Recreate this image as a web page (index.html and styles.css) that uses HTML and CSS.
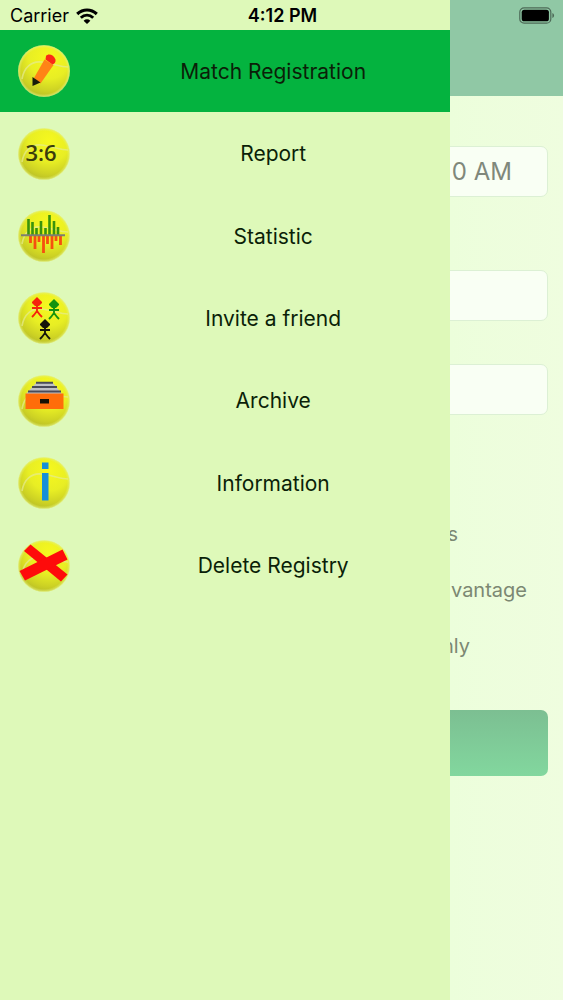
FILE: index.html
```html
<!DOCTYPE html>
<html lang="en">
<head>
    <meta charset="UTF-8">
    <meta name="viewport" content="width=device-width, initial-scale=1.0">
    <title>Match Registration</title>
    <link rel="stylesheet" href="styles.css">
</head>
<body>
    <!-- shared tennis ball -->
    <svg class="defs" width="0" height="0" aria-hidden="true">
        <defs>
            <radialGradient id="ballShade" cx="0.6" cy="0.25" r="0.8">
                <stop offset="0" stop-color="#f6f81e"/>
                <stop offset="0.5" stop-color="#e8ee24"/>
                <stop offset="0.8" stop-color="#cdd224"/>
                <stop offset="1" stop-color="#b4ba28"/>
            </radialGradient>
            <radialGradient id="ballEdge">
                <stop offset="0.88" stop-color="#e4f070" stop-opacity="0"/>
                <stop offset="1" stop-color="#e4f283" stop-opacity="0.8"/>
            </radialGradient>
            <symbol id="ball" viewBox="0 0 52 52">
                <circle cx="26" cy="26" r="25.6" fill="url(#ballShade)"/>
                <path d="M4 34C6 22 14 16 23 17C34 18 42 22 50 22" fill="none" stroke="#e6eb92" stroke-width="1.6" opacity="0.7"/>
                <circle cx="26" cy="26" r="26" fill="url(#ballEdge)"/>
            </symbol>
            <symbol id="person" viewBox="0 0 12 21">
                <path d="M6 0L8 2L11 5V6L8 9H4L1 6V5L4 2Z" fill="currentColor"/>
                <path d="M6 8V15M1 11H11M6 14L3 18L1 20M6 14L9 18L11 20" fill="none" stroke="currentColor" stroke-width="1.9"/>
            </symbol>
        </defs>
    </svg>

    <div class="page">
        <header class="status">
            <div class="status-left">
                <span>Carrier</span>
                <svg class="wifi" viewBox="0 0 22 16" aria-hidden="true">
                    <path d="M1.2 6C7 0.6 15 0.6 20.8 6" fill="none" stroke="#000" stroke-width="3.1"/>
                    <path d="M4.8 9.8C8.5 6.3 13.5 6.3 17.2 9.8" fill="none" stroke="#000" stroke-width="2.9"/>
                    <path d="M11 16L7.6 12.7C9.7 10.9 12.3 10.9 14.4 12.7Z" fill="#000"/>
                </svg>
            </div>
            <div class="status-time">4:12 PM</div>
            <div class="status-right">
                <svg class="battery" viewBox="0 0 36 17" aria-hidden="true">
                    <rect x="0.8" y="0.8" width="31" height="15.4" rx="4.3" fill="none" stroke="#4d6a57" stroke-width="1.2"/>
                    <rect x="2.7" y="2.7" width="27.2" height="11.6" rx="2.6" fill="#000"/>
                    <path d="M33.4 6C35.6 6.8 35.6 10.2 33.4 11Z" fill="#4d6a57"/>
                </svg>
            </div>
        </header>

        <aside class="drawer">
            <nav class="menu">
                <a class="item active" href="#">
                    <svg class="icon" viewBox="0 0 52 52" aria-hidden="true">
                        <use href="#ball"/>
                        <path d="M26.5 14.5L35.5 20L22.5 38.5L16 33Z" fill="#ff8316"/>
                        <path d="M28 11C30 8 36 9.5 37.5 14.5C38 17 36.5 19 34.5 19.5L27.5 14.5Z" fill="#fa2a16"/>
                        <path d="M14.5 32L22.5 37.5L14.5 41Z" fill="#171c0a"/>
                    </svg>
                    <span class="item-name">Match Registration</span>
                </a>
                <a class="item" href="#">
                    <svg class="icon" viewBox="0 0 52 52" aria-hidden="true">
                        <use href="#ball"/>
                        <text class="score" x="23" y="33" text-anchor="middle">3:6</text>
                    </svg>
                    <span class="item-name">Report</span>
                </a>
                <a class="item" href="#">
                    <svg class="icon" viewBox="0 0 52 52" aria-hidden="true">
                        <use href="#ball"/>
                        <path d="M10.5 9V25M14.5 12V25M18.5 18V25M23 11V25M27.5 18V25M31.5 5V25M36 11V25M40 17V25" stroke="#39930c" stroke-width="2.6"/>
                        <path d="M12.5 26V33M17 26V39M21 26V32M25.5 26V43M29.5 26V34M34 26V39M38 26V31M42.5 26V35" stroke="#f5500f" stroke-width="2.8"/>
                        <path d="M3 25.3H47" stroke="#7d7f72" stroke-width="2"/>
                    </svg>
                    <span class="item-name">Statistic</span>
                </a>
                <a class="item" href="#">
                    <svg class="icon" viewBox="0 0 52 52" aria-hidden="true">
                        <use href="#ball"/>
                        <use class="red" href="#person" x="13" y="5" width="12" height="21"/>
                        <use class="green" href="#person" x="30" y="7" width="12" height="21"/>
                        <use class="black" href="#person" x="21" y="27" width="12" height="21"/>
                    </svg>
                    <span class="item-name">Invite a friend</span>
                </a>
                <a class="item" href="#">
                    <svg class="icon" viewBox="0 0 52 52" aria-hidden="true">
                        <use href="#ball"/>
                        <path d="M18 8H35L44 19H8Z" fill="#bfc0c4"/>
                        <path d="M18 7.7H35M14 12H39M10 16.5H43" stroke="#4a4b58" stroke-width="2"/>
                        <path d="M7.5 18.5H45.5V34H7.5Z" fill="#ff6d0a"/>
                        <rect x="22" y="24" width="9" height="4.5" fill="#161005"/>
                    </svg>
                    <span class="item-name">Archive</span>
                </a>
                <a class="item" href="#">
                    <svg class="icon" viewBox="0 0 52 52" aria-hidden="true">
                        <use href="#ball"/>
                        <path d="M24 5.5H30.5V12H24ZM24 16H30.5V43.5H24Z" fill="#168fd8"/>
                    </svg>
                    <span class="item-name">Information</span>
                </a>
                <a class="item" href="#">
                    <svg class="icon" viewBox="0 0 52 52" aria-hidden="true">
                        <use href="#ball"/>
                        <path d="M12.5 4.5L49.5 34.5L43 41.5L6 11Z" fill="#fe0b0b"/>
                        <path d="M44.5 9.5L49.5 19.5L7 40.5L1.5 31Z" fill="#fe0b0b"/>
                    </svg>
                    <span class="item-name">Delete Registry</span>
                </a>
            </nav>
        </aside>

        <main class="screen">
            <div class="top-bar"></div>
            <form class="form">
                <input class="field field-time" type="text" value="0 AM" aria-label="Time">
                <input class="field field-first" type="text" aria-label="First player">
                <input class="field field-second" type="text" aria-label="Second player">
                <div class="options">
                    <div class="option short">s</div>
                    <div class="option long">vantage</div>
                    <div class="option middle">nly</div>
                </div>
                <button class="start" type="button" aria-label="Start"></button>
            </form>
        </main>
    </div>
</body>
</html>
```
FILE: styles.css
```css
* {
    margin: 0;
    padding: 0;
    box-sizing: border-box;
}
body {
    font-family: Inter, sans-serif;
    color: #0b1f08;
}
.defs {
    position: absolute;
}
.page {
    position: relative;
    min-height: 100vh;
    overflow: hidden;
    background: linear-gradient(90deg, #ecfedb 80%, #effddf 100%);
}

/* status bar lies over both the drawer and the screen */
.status {
    position: absolute;
    top: 0;
    left: 0;
    width: 100%;
    height: 31px;
    padding: 0 8px 0 10px;
    display: grid;
    grid-template-columns: 1fr auto 1fr;
    align-items: center;
    font-size: 18px;
    color: #000;
    z-index: 3;
}
.status-left {
    display: flex;
    align-items: center;
    gap: 7px;
}
.status-time {
    font-weight: 600;
}
.status-right {
    display: flex;
    justify-content: flex-end;
}
.wifi {
    width: 22px;
    height: 16px;
}
.battery {
    width: 36px;
    height: 17px;
}

.drawer {
    position: absolute;
    top: 0;
    left: 0;
    width: 80%;
    height: 100%;
    padding-top: 30px;
    background-color: #def9b9;
    z-index: 2;
}
.menu {
    display: grid;
    grid-template-rows: repeat(7, 1fr);
    height: 577px;
}
.item {
    display: flex;
    align-items: center;
    padding-left: 18px;
    color: #0b1f08;
    text-decoration: none;
}
.active {
    background-color: #04b33f;
}
.icon {
    flex: none;
    width: 52px;
    height: 52px;
    margin-right: 26px;
}
.item-name {
    flex: 1;
    font-size: 21px;
    text-align: center;
}
.score {
    font-family: "Open Sans", sans-serif;
    font-size: 22px;
    font-weight: 600;
    fill: #3b3c0c;
}
.red {
    color: #f5220c;
}
.green {
    color: #15930f;
}
.black {
    color: #15160a;
}

.top-bar {
    height: 96px;
    background-color: #90c8a5;
}
.form {
    display: flex;
    flex-direction: column;
    padding: 50px 15px;
}
.field {
    width: 100%;
    height: 51px;
    padding-right: 35px;
    border: 1px solid #dcf0d4;
    border-radius: 7px;
    background-color: #f9fff4;
    font-family: inherit;
    font-size: 24px;
    text-align: right;
    color: #80887b;
}
.field-time {
    margin-bottom: 73px;
}
.field-first {
    margin-bottom: 43px;
}
.field-second {
    margin-bottom: 91px;
}
.options {
    display: flex;
    flex-direction: column;
    margin-bottom: 36px;
    font-size: 20px;
    line-height: 56px;
    color: #7c8873;
    text-align: right;
}
.short {
    padding-right: 90px;
}
.long {
    padding-right: 21px;
}
.middle {
    padding-right: 78px;
}
.start {
    height: 66px;
    border: 0;
    border-radius: 7px;
    background: linear-gradient(#7cbf92, #82d79e);
}
```
